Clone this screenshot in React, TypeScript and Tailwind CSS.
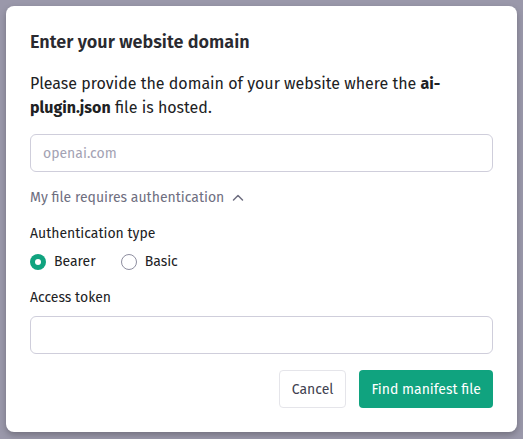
const App = () => {
  return (
    <div
      className="w-[523px] h-[439px] bg-[#9a98aa] p-[6px] text-[#202123]"
      style={{ fontFamily: '"Fira Sans", Lato, "Noto Sans", sans-serif' }}
    >
      <div className="h-[426px] bg-white rounded-[8px] shadow-[0_3px_6px_rgba(0,0,0,0.25)] px-[24px] pt-[24px]">
        <h2 className="text-[18px] font-semibold leading-[24px] text-[#2a2a30]">
          Enter your website domain
        </h2>
        <p className="mt-[18px] text-[16px] leading-[24px] text-[#202123]">
          Please provide the domain of your website where the <b className="font-bold">ai-plugin.json</b> file is hosted.
        </p>

        <input
          placeholder="openai.com"
          className="mt-[14px] block w-full h-[38px] rounded-[6px] border border-[#cfcedb] px-[12px] text-[14px] outline-none placeholder:text-[#a3a2b3]"
        />

        <button className="mt-[16px] flex items-center gap-[8px] text-[14px] leading-[20px] text-[#6e6e80]">
          My file requires authentication
          <svg width="12" height="12" viewBox="0 0 12 12" fill="none" stroke="#6e6e80" strokeWidth="1.5" strokeLinecap="round" strokeLinejoin="round">
            <path d="M1.5 8 L6 3.5 L10.5 8" />
          </svg>
        </button>

        <div className="mt-[16px] text-[14px] leading-[20px] text-[#202123]">Authentication type</div>
        <div className="mt-[8px] flex items-center text-[14px] leading-[20px]">
          <label className="flex items-center gap-[8px]">
            <span className="w-[16px] h-[16px] rounded-full bg-[#10a37f] flex items-center justify-center">
              <span className="w-[6px] h-[6px] rounded-full bg-white" />
            </span>
            Bearer
          </label>
          <label className="ml-[25px] flex items-center gap-[8px]">
            <span className="w-[16px] h-[16px] rounded-full border border-[#8e8ea0] bg-white" />
            Basic
          </label>
        </div>

        <div className="mt-[16px] text-[14px] leading-[20px]">Access token</div>
        <input className="mt-[8px] block w-full h-[38px] rounded-[6px] border border-[#cfcedb] px-[12px] text-[14px] outline-none" />

        <div className="mt-[16px] flex justify-end gap-[13px]">
          <button className="h-[38px] px-[12px] rounded-[4px] border border-[#e5e5ea] bg-white text-[14px] text-[#40414f]">
            Cancel
          </button>
          <button className="h-[38px] px-[12px] rounded-[4px] bg-[#10a37f] text-[14px] text-white">
            Find manifest file
          </button>
        </div>
      </div>
    </div>
  );
};

export default App;
